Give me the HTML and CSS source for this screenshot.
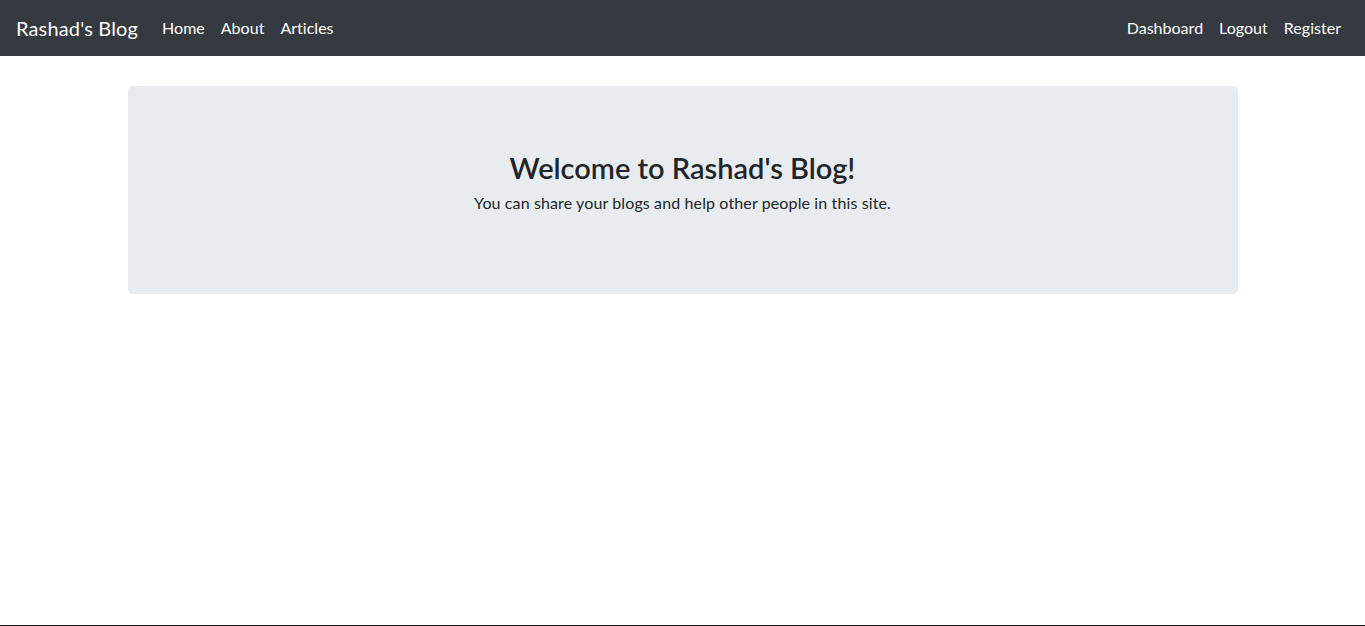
FILE: index.html
```html
<!DOCTYPE html>
<html lang="en">
<head>
<meta charset="utf-8">
<title>Rashad's Blog</title>
<link rel="stylesheet" href="styles.css">
</head>
<body>
<nav class="navbar">
  <a class="brand" href="#">Rashad's Blog</a>
  <ul class="nav-links">
    <li><a href="#">Home</a></li>
    <li><a href="#">About</a></li>
    <li><a href="#">Articles</a></li>
  </ul>
  <ul class="nav-links nav-right">
    <li><a href="#">Dashboard</a></li>
    <li><a href="#">Logout</a></li>
    <li><a href="#">Register</a></li>
  </ul>
</nav>
<main class="container">
  <section class="jumbotron">
    <h1 class="title">Welcome to Rashad's Blog!</h1>
    <p class="lead">You can share your blogs and help other people in this site.</p>
  </section>
</main>
<div class="bottom-edge"></div>
</body>
</html>
```
FILE: styles.css
```css
* { box-sizing: border-box; }
html, body { margin: 0; padding: 0; }
body {
  font-family: Lato, "Liberation Sans", sans-serif;
  font-size: 16px;
  line-height: 1.5;
  color: #212529;
  background: #fff;
}
a { text-decoration: none; }
.navbar {
  display: flex;
  align-items: center;
  height: 56px;
  padding: 8px 16px;
  background: #343a40;
}
.brand {
  color: #fff;
  font-size: 20px;
  line-height: 30px;
  letter-spacing: 0.15px;
  margin-right: 16px;
  padding: 5px 0;
}
.nav-links {
  display: flex;
  list-style: none;
  margin: 0;
  padding: 0;
}
.nav-links a {
  display: block;
  color: #fff;
  padding: 8px;
  letter-spacing: 0.02px;
}
.nav-right { margin-left: auto; }
.container {
  width: 1140px;
  margin: 0 auto;
  padding: 30px 15px 0;
}
.jumbotron {
  background: #e9ecef;
  border-radius: 4.8px;
  padding: 65px 32px 63px;
  text-align: center;
}
.title {
  margin: 0 0 5px;
  font-size: 29px;
  font-weight: 600;
  line-height: 1.2;
}
.lead {
  margin: 0 0 16px;
  letter-spacing: 0.12px;
}
.bottom-edge {
  position: fixed;
  left: 0;
  right: 0;
  bottom: 0;
  height: 1px;
  background: #1a1a1a;
}
```
